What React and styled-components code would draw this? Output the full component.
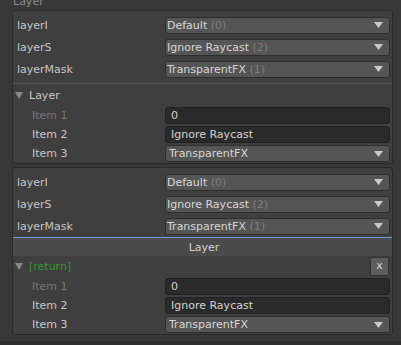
import React from 'react';
import styled, { createGlobalStyle } from 'styled-components';

const Global = createGlobalStyle`
  html, body { margin: 0; padding: 0; background: #383838; }
  body {
    font-family: "DejaVu Sans", Verdana, sans-serif;
    font-size: 11px;
    color: #c4c4c4;
    width: 401px;
    height: 345px;
    overflow: hidden;
  }
  * { box-sizing: border-box; }
`;

const Page = styled.div`
  display: flex;
  flex-direction: column;
  height: 345px;
`;

const Column = styled.div`
  display: flex;
  flex-direction: column;
  padding: 0 8px 0 12px;
`;

const CutTitle = styled.div`
  height: 10px;
  overflow: hidden;
  display: flex;
  align-items: flex-end;
  padding-left: 1px;
  color: #8c8c8c;
  span { line-height: 13px; margin-bottom: 2px; }
`;

const Panel = styled.div`
  background: #3f3f3f;
  border: 1px solid #2a2a2a;
  border-radius: 3px;
  display: flex;
  flex-direction: column;
  padding-top: ${p => p.$top || 3}px;
  margin-top: ${p => p.$mt || 0}px;
  overflow: hidden;
`;

const Row = styled.div`
  display: grid;
  grid-template-columns: ${p => p.$indent ? 133 : 148}px 1fr;
  align-items: center;
  height: ${p => p.$h || 22}px;
  padding: 0 2px 0 ${p => p.$indent ? 19 : 4}px;
`;

const Label = styled.div`
  color: ${p => p.$dim ? '#767676' : '#c6c6c6'};
  white-space: nowrap;
`;

const Dropdown = styled.div`
  height: ${p => p.$h || 17}px;
  background: #555555;
  border: 1px solid #2e2e2e;
  border-radius: 3px;
  display: flex;
  align-items: center;
  padding: 0 6px 0 ${p => p.$pl || 1}px;
  color: #d6d6d6;
  white-space: nowrap;
`;

const DropText = styled.span`
  flex: 1;
  overflow: hidden;
`;

const Muted = styled.span`
  color: #7e7e7e;
`;

const TextField = styled.div`
  height: 17px;
  background: #2a2a2a;
  border: 1px solid #212121;
  border-radius: 3px;
  display: flex;
  align-items: center;
  padding-left: 5px;
  color: #d2d2d2;
  white-space: nowrap;
`;

const Separator = styled.div`
  height: 1px;
  background: #565656;
  margin-top: 3px;
`;

const Foldout = styled.div`
  display: flex;
  align-items: center;
  height: ${p => p.$h || 22}px;
  padding: 0 3px 0 2px;
  gap: 6px;
`;

const FoldText = styled.span`
  flex: 1;
  color: ${p => p.$green ? '#2e9a2e' : '#c6c6c6'};
`;

const Header = styled.div`
  border-top: 1px solid #6a9ee2;
  background: #4b4b4b;
  height: 19px;
  display: flex;
  align-items: center;
  justify-content: center;
  padding-left: 3px;
  color: #d0d0d0;
`;

const CloseButton = styled.div`
  width: 19px;
  height: 19px;
  background: #5c5c5c;
  border: 1px solid #333;
  border-radius: 2px;
  display: flex;
  align-items: center;
  justify-content: center;
  color: #dadada;
  font-size: 11px;
  padding-bottom: 2px;
`;

const Footer = styled.div`
  margin-top: auto;
  height: 4px;
  background: #2f2f2f;
`;

const Arrow = () => (
  <svg width="9" height="6" viewBox="0 0 9 6">
    <path d="M0 0 H9 L4.5 6 Z" fill="#c9c9c9" />
  </svg>
);

const FoldArrow = () => (
  <svg width="8" height="7" viewBox="0 0 8 7">
    <path d="M0 0 H8 L4 7 Z" fill="#8a8a8a" />
  </svg>
);

const Select = ({ name, count, h, pl }) => (
  <Dropdown $h={h} $pl={pl}>
    <DropText>{name}{count !== undefined && <Muted> ({count})</Muted>}</DropText>
    <Arrow />
  </Dropdown>
);

const layerRows = [
  { label: 'layerI', name: 'Default', count: 0 },
  { label: 'layerS', name: 'Ignore Raycast', count: 2 },
  { label: 'layerMask', name: 'TransparentFX', count: 1 },
];

const LayerRows = () => layerRows.map(r => (
  <Row key={r.label}>
    <Label>{r.label}</Label>
    <Select name={r.name} count={r.count} />
  </Row>
));

const Items = () => (
  <>
    <Row $indent $h={19}>
      <Label $dim>Item 1</Label>
      <TextField>0</TextField>
    </Row>
    <Row $indent $h={19}>
      <Label>Item 2</Label>
      <TextField>Ignore Raycast</TextField>
    </Row>
    <Row $indent $h={19}>
      <Label>Item 3</Label>
      <Select name="TransparentFX" pl={3} />
    </Row>
  </>
);

export default function App() {
  return (
    <Page>
      <Global />
      <Column>
        <CutTitle><span>Layer</span></CutTitle>
        <Panel>
          <LayerRows />
          <Separator />
          <Foldout $h={22}>
            <FoldArrow />
            <FoldText>Layer</FoldText>
          </Foldout>
          <Items />
        </Panel>
        <Panel $mt={3} $top={3}>
          <LayerRows />
          <Header>Layer</Header>
          <Foldout $h={21}>
            <FoldArrow />
            <FoldText $green>[return]</FoldText>
            <CloseButton>x</CloseButton>
          </Foldout>
          <Items />
        </Panel>
      </Column>
      <Footer />
    </Page>
  );
}
